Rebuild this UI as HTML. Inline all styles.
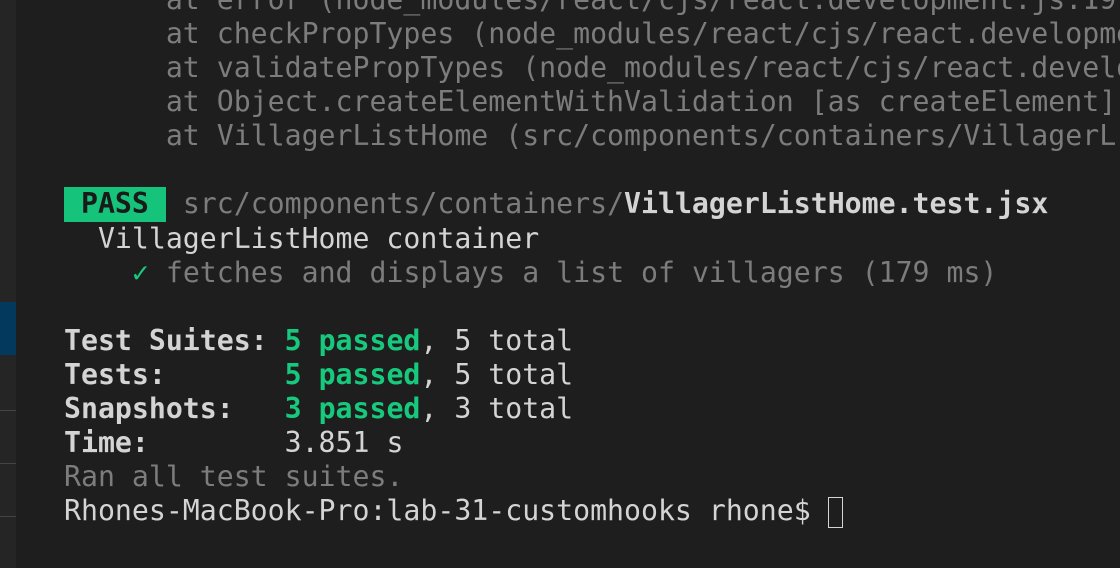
<!DOCTYPE html>
<html><head><style>
html,body{margin:0;padding:0;width:1120px;height:568px;overflow:hidden;background:#1e1e1e;}
.side{position:absolute;left:0;top:0;width:16px;height:568px;background:#252526;}
.hl{position:absolute;left:0;top:302px;width:16px;height:53px;background:#04395e;}
.sep{position:absolute;left:0;width:16px;height:1px;background:#454545;}
pre{position:absolute;left:64px;top:-17px;margin:0;font-family:"DejaVu Sans Mono","Liberation Mono",monospace;font-size:28.2px;line-height:34px;color:#d4d4d4;white-space:pre;}
.g{color:#7c7c7c}
.b{font-weight:bold}
.gr{color:#17c97d;font-weight:bold}
.pass{background:#15c37a;color:#1a1a1a;font-weight:bold;display:inline-block;height:35px;line-height:34px;}
.cur{display:inline-block;width:15px;height:31px;border:1px solid #d4d4d4;vertical-align:-8px;box-sizing:border-box;}
</style></head><body>
<div class="side"></div><div class="hl"></div>
<div class="sep" style="top:410px"></div><div class="sep" style="top:463px"></div><div class="sep" style="top:516px"></div>
<pre><span class="g">      at error (node_modules/react/cjs/react.development.js:19</span>
<span class="g">      at checkPropTypes (node_modules/react/cjs/react.developme</span>
<span class="g">      at validatePropTypes (node_modules/react/cjs/react.develo</span>
<span class="g">      at Object.createElementWithValidation [as createElement]</span>
<span class="g">      at VillagerListHome (src/components/containers/VillagerL</span>

<span class="pass"> PASS </span> <span class="g">src/components/containers/</span><span class="b">VillagerListHome.test.jsx</span>
  VillagerListHome container
    <span style="color:#17c97d">✓</span> <span class="g">fetches and displays a list of villagers (179 ms)</span>

<span class="b">Test Suites: </span><span class="gr">5 passed</span>, 5 total
<span class="b">Tests:       </span><span class="gr">5 passed</span>, 5 total
<span class="b">Snapshots:   </span><span class="gr">3 passed</span>, 3 total
<span class="b">Time:</span>        3.851 s
<span class="g">Ran all test suites.</span>
Rhones-MacBook-Pro:lab-31-customhooks rhone$ <span class="cur"></span></pre>
</body></html>
